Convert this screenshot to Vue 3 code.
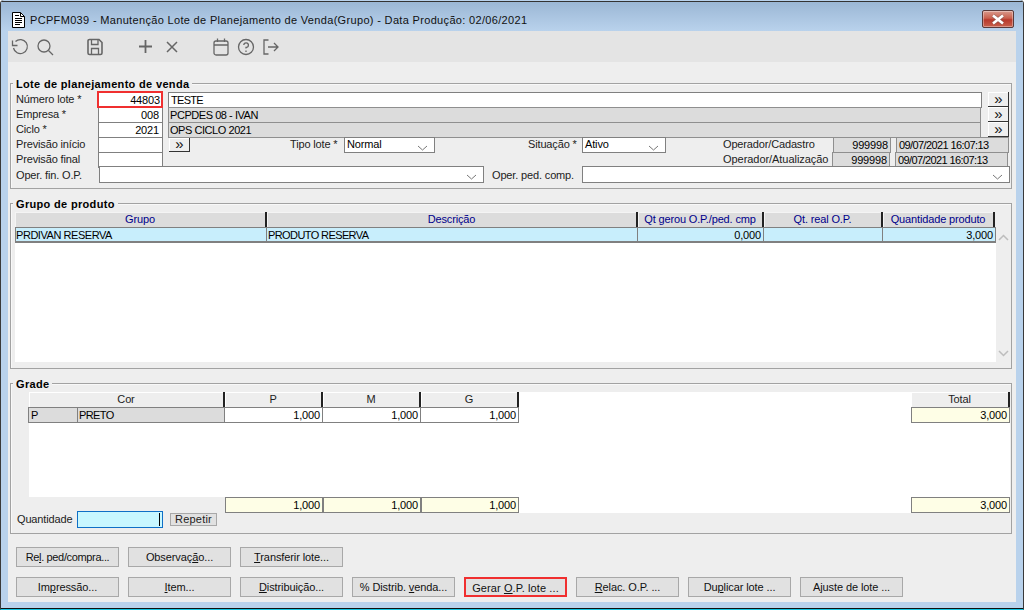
<script setup>
const gridHeaders = [
  { label: 'Grupo', cls: 'c1' },
  { label: 'Descrição', cls: 'c2' },
  { label: 'Qt gerou O.P./ped. cmp', cls: 'c3' },
  { label: 'Qt. real O.P.', cls: 'c4' },
  { label: 'Quantidade produto', cls: 'c5' },
]
</script>

<template>
  <div class="window">
    <header class="titlebar">
      <svg class="doc" width="13" height="16" viewBox="0 0 13 16">
        <path d="M.5.5H8.500L12.500 4.500V15.500H.5Z" fill="#fff" stroke="#000" />
        <path d="M8.500.5V4.500H12.500" fill="none" stroke="#000" />
        <path d="M3 3.500H7M3 6.500H10M3 8.500H10M3 10.500H10M3 12.500H8" stroke="#000" stroke-width="1" />
      </svg>
      <span class="title">PCPFM039 - Manutenção Lote de Planejamento de Venda(Grupo) - Data Produção: 02/06/2021</span>
      <div class="close">
        <svg width="18" height="11" viewBox="0 0 18 11">
          <path d="M4 1.500L14 9.500M14 1.500L4 9.500" stroke="#5d5d5d" stroke-width="4" fill="none" opacity=".45" />
          <path d="M4 1.500L14 9.500M14 1.500L4 9.500" stroke="#fff" stroke-width="2.600" fill="none" />
        </svg>
      </div>
    </header>

    <div class="client">
      <nav class="toolbar">
        <svg class="ti i-undo" width="18" height="18" viewBox="0 0 18 18"><path d="M4.500 3.500A7 7 0 1 1 2.500 10M1.500 2.500V7.500H6.500" /></svg>
        <svg class="ti i-search" width="18" height="18" viewBox="0 0 18 18"><circle cx="8" cy="8" r="6" /><path d="M12.500 12.500L17 17" /></svg>
        <svg class="ti i-save" width="16" height="18" viewBox="0 0 16 18"><path d="M2.500 1.500H12L15 4.500V15A1.500 1.500 0 0 1 13.500 16.500H2.500A1.500 1.500 0 0 1 1 15V3A1.500 1.500 0 0 1 2.500 1.500Z" stroke-width="1.600" /><path d="M4.500 2V6.500H11V2M4.500 16V10.500H11.500V16" /></svg>
        <svg class="ti i-plus" width="13" height="13" viewBox="0 0 13 13"><path d="M6.500 0V13M0 6.500H13" stroke-width="1.800" /></svg>
        <svg class="ti i-x" width="12" height="12" viewBox="0 0 12 12"><path d="M1 1L11 11M11 1L1 11" stroke-width="1.500" /></svg>
        <svg class="ti i-cal" width="16" height="18" viewBox="0 0 16 18"><rect x="1" y="3" width="14" height="14" rx="2" /><path d="M1 7H15M4.500 .5V4M11.500 .5V4" /></svg>
        <svg class="ti i-help" width="18" height="18" viewBox="0 0 18 18"><circle cx="9" cy="9" r="7.500" /><path d="M6.800 7A2.300 2.300 0 1 1 9 9.500V10.500M9 12.500V14" /></svg>
        <svg class="ti i-exit" width="16" height="18" viewBox="0 0 16 18"><path d="M5.500 2H1V16H5.500M5 9H15M11 5L15 9L11 13" /></svg>
      </nav>

      <section class="group g1">
        <h3 class="legend">Lote de planejamento de venda</h3>
        <div class="row">
          <label class="lb">Número lote *</label>
          <div class="cell code red">44803</div>
          <div class="cell long first">TESTE</div>
          <button class="more">»</button>
        </div>
        <div class="row">
          <label class="lb">Empresa *</label>
          <div class="cell code">008</div>
          <div class="cell long ro">PCPDES 08 - IVAN</div>
          <button class="more">»</button>
        </div>
        <div class="row">
          <label class="lb">Ciclo *</label>
          <div class="cell code">2021</div>
          <div class="cell long ro">OPS CICLO 2021</div>
          <button class="more">»</button>
        </div>
        <div class="row">
          <label class="lb">Previsão início</label>
          <div class="cell code"></div>
          <button class="more dates">»</button>
          <label class="lb tipo">Tipo lote *</label>
          <div class="cell sel s-tipo">Normal<svg class="chev" width="11" height="6" viewBox="0 0 11 6"><path d="M1 1L5.500 5L10 1" /></svg></div>
          <label class="lb sit">Situação *</label>
          <div class="cell sel s-sit">Ativo<svg class="chev" width="11" height="6" viewBox="0 0 11 6"><path d="M1 1L5.500 5L10 1" /></svg></div>
          <label class="lb op">Operador/Cadastro</label>
          <div class="cell ro opn">999998</div>
          <div class="cell ro opd">09/07/2021 16:07:13</div>
        </div>
        <div class="row">
          <label class="lb">Previsão final</label>
          <div class="cell code"></div>
          <label class="lb op2">Operador/Atualização</label>
          <div class="cell ro opn">999998</div>
          <div class="cell ro opd">09/07/2021 16:07:13</div>
        </div>
        <div class="row">
          <label class="lb fin">Oper. fin. O.P.</label>
          <div class="cell sel s-fin"><svg class="chev" width="11" height="6" viewBox="0 0 11 6"><path d="M1 1L5.500 5L10 1" /></svg></div>
          <label class="lb ped">Oper. ped. comp.</label>
          <div class="cell sel s-ped"><svg class="chev" width="11" height="6" viewBox="0 0 11 6"><path d="M1 1L5.500 5L10 1" /></svg></div>
        </div>
      </section>

      <section class="group g2">
        <h3 class="legend">Grupo de produto</h3>
        <div class="ghead">
          <div v-for="h in gridHeaders" :key="h.label" class="gh" :class="h.cls">{{ h.label }}</div>
        </div>
        <div class="gbody">
          <div class="grow">
            <div class="gc c1 up">PRDIVAN RESERVA</div>
            <div class="gc c2 up">PRODUTO RESERVA</div>
            <div class="gc c3 num">0,000</div>
            <div class="gc c4 num"></div>
            <div class="gc c5 num">3,000</div>
          </div>
          <div class="scroll">
            <svg width="11" height="7" viewBox="0 0 11 7"><path d="M1 6L5.500 1.500L10 6" /></svg>
            <svg width="11" height="7" viewBox="0 0 11 7"><path d="M1 1L5.500 5.500L10 1" /></svg>
          </div>
        </div>
      </section>

      <section class="group g3">
        <h3 class="legend">Grade</h3>
        <div class="grade">
          <div class="th">Cor</div>
          <div class="th">P</div>
          <div class="th">M</div>
          <div class="th">G</div>
          <div class="td-gap"></div>
          <div class="th">Total</div>

          <div class="color">
            <div class="td ro cp">P</div>
            <div class="td ro cn up">PRETO</div>
          </div>
          <div class="td num">1,000</div>
          <div class="td num">1,000</div>
          <div class="td num">1,000</div>
          <div class="td-gap"></div>
          <div class="td num yel">3,000</div>

          <div class="spacer"></div>

          <div class="foot-gap"></div>
          <div class="td num yel">1,000</div>
          <div class="td num yel">1,000</div>
          <div class="td num yel">1,000</div>
          <div class="td-gap"></div>
          <div class="td num yel">3,000</div>
        </div>
        <div class="qty">
          <label class="lb qlb">Quantidade</label>
          <div class="qinput"><span class="caret"></span></div>
          <button class="rep">Repetir</button>
        </div>
      </section>

      <div class="actions">
        <button class="act tight">Re<u>l</u>. ped/compra...</button>
        <button class="act">Observaç<u>ã</u>o...</button>
        <button class="act"><u>T</u>ransferir lote...</button>
      </div>
      <div class="actions a2">
        <button class="act">Im<u>p</u>ressão...</button>
        <button class="act"><u>I</u>tem...</button>
        <button class="act"><u>D</u>istribuição...</button>
        <button class="act">% Distrib. <u>v</u>enda...</button>
        <button class="act hot">Gerar <u>O</u>.P. lote ...</button>
        <button class="act"><u>R</u>elac. O.P. ...</button>
        <button class="act">Du<u>p</u>licar lote ...</button>
        <button class="act">A<u>j</u>uste de lote ...</button>
      </div>
    </div>
  </div>
</template>

<style>
html, body { margin: 0; background: #fff; }
</style>

<style scoped>
* { box-sizing: border-box; }
.window {
  width: 1024px; height: 610px; overflow: hidden;
  display: flex; flex-direction: column;
  padding: 1px 0 0;
  background: #b9d2ec;
  border-left: 1px solid #3a3a3a; border-right: 1px solid #3a3a3a; border-bottom: 1px solid #16c4e0;
  box-shadow: inset 0 -1px 0 #111;
  border-radius: 4px 4px 0 0;
  font: 11px/15px "Liberation Sans", Arial, sans-serif;
  letter-spacing: -.15px;
  color: #000;
}
.titlebar {
  height: 30px; flex: none; display: flex; align-items: center;
  border-top: 1px solid #333;
  background: linear-gradient(#9bb7d5, #b9d2ec);
  padding: 5px 9px 0 11px;
}
.doc { flex: none; margin-top: 1px; }
.title { margin-left: 5px; font-size: 11px; letter-spacing: .33px; color: #111; margin-top: 2px; }
.close {
  margin-left: auto; width: 32px; height: 18px;
  border: 1px solid #5a3a3a; border-radius: 2px;
  background: linear-gradient(#d99a8c 0, #c9604e 45%, #b8392c 55%, #c8604c 100%);
  box-shadow: inset 0 0 0 1px rgba(255,255,255,.35);
  display: flex; align-items: center; justify-content: center;
}
.client {
  margin: 0 6px 0 7px; width: 1008px; height: 571px; flex: none;
  background: #eeeeee;
}
.toolbar { height: 31px; background: #e4e4e4; display: flex; align-items: center; }
.ti { fill: none; stroke: #666; stroke-width: 1.300; flex: none; }
.i-undo { margin-left: 3px; }
.i-search { margin-left: 7px; }
.i-save { margin-left: 33px; }
.i-plus { margin-left: 36px; }
.i-x { margin-left: 14px; }
.i-cal { margin-left: 35px; }
.i-help { margin-left: 8px; }
.i-exit { margin-left: 8px; }

.group {
  position: relative; margin-left: 2px; width: 1002px;
  border: 1px solid #a2a2a2;
  box-shadow: inset 1px 1px 0 #f8f8f8;
}
.legend {
  position: absolute; left: 2px; top: -7px; margin: 0; padding: 0 3px;
  background: #eee; font: bold 11px/14px "Liberation Sans", Arial, sans-serif; letter-spacing: .33px;
}
.g1 { margin-top: 21px; height: 106px; padding: 8px 0 0 5px; }
.row { display: flex; height: 15px; align-items: flex-start; }
.lb { white-space: nowrap; color: #222; }
.row > .lb:first-child { width: 82px; flex: none; }
.cell { height: 16px; border: 1px solid #808080; background: #fff; padding: 0 2px; line-height: 14px; white-space: nowrap; flex: none; position: relative; }
.code { width: 65px; text-align: right; padding-right: 3px; }
.red { border: 2px solid #f02f2f; width: 66px; height: 17px; margin: -1px 0 -1px -1px; line-height: 14px; position: relative; z-index: 1; padding-right: 1px; }
.long { width: 813px; margin-left: 5px; letter-spacing: -.45px; padding-left: 1px; }
.long.first { width: 814px; letter-spacing: -.7px; padding-left: 2px; }
.up { letter-spacing: -.6px; }
.ro { background: #dcdcdc; border-color: #8f8f8f; }
.more {
  width: 21px; height: 15px; padding: 0 0 2px; margin-left: 6px; flex: none;
  border: none; background: #eee;
  box-shadow: inset -1px -1px 0 #333, inset 1px 1px 0 #fff;
  font: 15px/12px "Liberation Sans", Arial, sans-serif; color: #111;
}
.long.ro + .more { margin-left: 7px; }
.dates { height: 14px; margin-top: 1px; }
.sel { line-height: 13px; }
.sel .chev { position: absolute; right: 6px; top: 7px; fill: none; stroke: #777; stroke-width: 1; }
.tipo { margin-left: 100px; width: 47px; }
.s-tipo { margin-left: 7px; width: 91px; }
.sit { margin-left: 93px; width: 49px; }
.s-sit { margin-left: 5px; width: 84px; }
.op { margin-left: 57px; width: 110px; }
.opn { width: 58px; text-align: right; padding-right: 2px; }
.opd { width: 113px; margin-left: 5px; padding-left: 2px; letter-spacing: -.6px; }
.op2 { margin-left: 560px; width: 109px; letter-spacing: -.05px; }
.fin { padding-top: 1px; }
.row:last-child .cell { height: 17px; margin-top: -1px; }
.s-fin { width: 385px; margin-left: 1px; }
.ped { margin-left: 8px; width: 90px; padding-top: 1px; }
.s-ped { width: 428px; }

.g2 { margin-top: 14px; height: 166px; padding: 8px 0 0 4px; }
.ghead { display: flex; height: 15px; }
.gh {
  height: 15px; background: #dcdcdc; color: #00008b; text-align: center;
  line-height: 14px; border-right: 2px solid #222; box-shadow: inset 1px 1px 0 #f4f4f4; flex: none;
}
.c1 { width: 252px; }
.c2 { width: 371px; }
.c3 { width: 126px; }
.c4 { width: 119px; }
.c5 { width: 112px; }
.gbody { height: 135px; display: flex; flex-direction: column; background: #fff; position: relative; width: 981px; }
.grow {
  display: flex; height: 16px; background: #c8eefc;
  border: 1px solid #808080; border-width: 1px 0 2px 1px; flex: none;
  width: 981px;
}
.gc { line-height: 15px; height: 13px; padding: 0 2px; border-right: 1px solid #808080; flex: none; white-space: nowrap; }
.gc.c1 { width: 251px; padding-left: 0; letter-spacing: -.45px; }
.gc.c2 { padding-left: 1px; }
.gc.c5 { width: 113px; }
.num { text-align: right; }
.scroll {
  position: absolute; left: 981px; top: 0; width: 15px; height: 135px;
  background: #eee; display: flex; flex-direction: column; justify-content: space-between; align-items: center;
  padding: 7px 0 5px;
}
.scroll svg { fill: none; stroke: #bdbdbd; stroke-width: 1.500; }

.g3 { margin-top: 14px; height: 151px; padding: 8px 0 0 18px; }
.grade {
  display: grid; width: 981px;
  grid-template-columns: 196px 98px 98px 98px 392px 99px;
  grid-template-rows: 15px 16px 74px 16px;
  background: #fff;
}
.th {
  background: #eee; text-align: center; line-height: 14px; color: #222;
  border-right: 2px solid #222; box-shadow: inset 1px 1px 0 #fff;
}
.td { border: 1px solid #808080; border-left-width: 0; padding: 0 2px; line-height: 14px; background: #fff; }
.color { display: flex; border-left: 1px solid #808080; margin-left: -1px; }
.td.ro { background: #dcdcdc; border-color: #808080; }
.cp { width: 49px; }
.cn { flex: 1; padding-left: 1px; }
.td-gap { background: #fff; }
.spacer { grid-column: 1 / -1; background: #fff; }
.foot-gap { background: #eee; }
.yel { background: #fefee6; border-left-width: 1px; }
.qty { display: flex; align-items: center; height: 17px; margin-top: -2px; margin-left: -12px; }
.qlb { width: 60px; }
.qinput { width: 86px; height: 17px; border: 1px solid #0f6fc6; background: #c8f7ff; position: relative; }
.caret { position: absolute; right: 2px; top: 1px; width: 1px; height: 13px; background: #000; }
.rep {
  width: 47px; height: 13px; margin-left: 7px; padding: 0;
  border: 1px solid #a8a8a8; background: #e1e1e1;
  font: 11px/11px "Liberation Sans", Arial, sans-serif; color: #222; letter-spacing: .2px;
}

.actions { display: flex; gap: 9px; margin: 13px 0 0 8px; }
.a2 { margin-top: 10px; }
.act {
  width: 103px; height: 20px; padding: 0;
  border: 1px solid #a8a8a8; background: #e1e1e1; color: #111;
  font: 11px/18px "Liberation Sans", Arial, sans-serif; letter-spacing: -.1px;
  white-space: nowrap; flex: none;
}
.tight { letter-spacing: -.35px; }
.hot { border: 2px solid #f02f2f; letter-spacing: .1px; }
</style>
